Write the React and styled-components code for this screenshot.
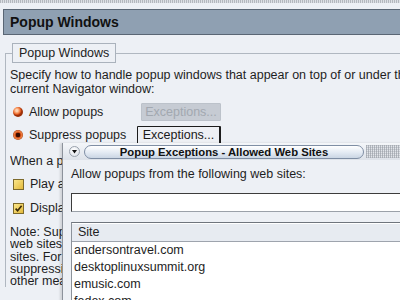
import React from 'react';
import styled, { createGlobalStyle } from 'styled-components';

const GlobalStyle = createGlobalStyle`
  html, body { margin: 0; padding: 0; background: #edf0f5; }
  body { font-family: "Liberation Sans", Arial, sans-serif; }
`;

const Screen = styled.div`
  position: relative;
  width: 400px;
  height: 300px;
  overflow: hidden;
  background: #edf0f5;
  color: #1e1e1e;
  font-size: 12.5px;
`;

const TopStrip = styled.div`
  height: 3px;
  background: repeating-linear-gradient(90deg, #b4b8be 0 1px, #dde0e5 1px 2px);
`;

const Header = styled.div`
  margin: 6px 0 0 3px;
  height: 24px;
  border: 1px solid #5a6674;
  border-right: none;
  background: #8fa0b2;
  padding-left: 6px;
  font-size: 14px;
  font-weight: bold;
  line-height: 24px;
  color: #111;
`;

const Group = styled.fieldset`
  margin: 8px 0 0 5px;
  padding: 5px 0 0 4px;
  border: none;
  border-top: 1px solid #b0b7c0;
  border-left: 1px solid #b0b7c0;
  min-width: 0;
`;

const Legend = styled.legend`
  margin-left: 2px;
  padding: 0 6px;
  height: 20px;
  line-height: 18px;
  border: 1px solid #aab2bc;
  box-sizing: border-box;
  color: #222;
`;

const Para = styled.div`
  line-height: ${p => p.$lh || 14}px;
  margin-top: ${p => p.$mt || 0}px;
  white-space: nowrap;
`;

// the part of the pane that sits under the exceptions window
const Hidden = styled.div`
  width: 52px;
  overflow: hidden;
`;

const OptionGrid = styled.div`
  display: grid;
  grid-template-columns: 127px auto;
  row-gap: 3px;
  margin-top: 6px;
`;

const OptionRow = styled.div`
  display: flex;
  align-items: center;
  height: ${p => p.$h || 20}px;
  padding-left: 3px;
  gap: 6px;
  white-space: nowrap;
`;

const Radio = styled.span`
  width: 10px;
  height: 10px;
  border-radius: 50%;
  flex: none;
  background: ${p => p.$on
    ? 'radial-gradient(circle at 50% 50%, #3a0d00 0 2px, #d24a14 2.6px, #f08a4a 4px, #a83408 5px)'
    : 'radial-gradient(circle at 38% 35%, #ffd2b0 0 1px, #f3864a 3px, #d9531c 4px, #9c3008 5px)'};
`;

const Check = styled.span`
  position: relative;
  width: 9px;
  height: 9px;
  flex: none;
  border: 1px solid #7d6a2c;
  background: linear-gradient(135deg, #fbe78a, #e3b93c);
  svg { position: absolute; left: 0; top: 0; }
`;

const ExcButton = styled.div`
  display: flex;
  align-items: center;
  justify-content: center;
  box-sizing: border-box;
  height: 18px;
  width: ${p => (p.$disabled ? 80 : 84)}px;
  margin-left: ${p => (p.$disabled ? 4 : 0)}px;
  font-size: 12.5px;
  background: ${p => (p.$disabled ? '#c6cbd3' : '#eef0f4')};
  color: ${p => (p.$disabled ? '#a2a8b0' : '#1a1a1a')};
  border: 1px solid ${p => (p.$disabled ? '#bcc2ca' : '#1c1c1c')};
  border-right-width: ${p => (p.$disabled ? 1 : 2)}px;
  border-radius: 1px;
  align-self: center;
`;

const Popup = styled.div`
  position: absolute;
  left: 62px;
  top: 143px;
  right: -20px;
  bottom: -20px;
  background: #edf0f5;
  border-left: 1px solid #8c929b;
  box-shadow: -2px 0 2px rgba(0, 0, 0, 0.12);
`;

const TitleBar = styled.div`
  display: flex;
  align-items: center;
  height: 17px;
  background: linear-gradient(#f4f6f9, #dde2e9);
  padding-left: 6px;
`;

const MenuKnob = styled.span`
  width: 11px;
  height: 11px;
  flex: none;
  border-radius: 50%;
  border: 1px solid #9aa2ad;
  box-sizing: border-box;
  background: radial-gradient(circle at 40% 35%, #ffffff, #d9dee6);
  display: flex;
  align-items: center;
  justify-content: center;
  svg { display: block; }
`;

const TitlePill = styled.div`
  margin-left: 4px;
  width: 280px;
  height: 14px;
  box-sizing: border-box;
  border: 1px solid #7f8ea4;
  border-radius: 7px;
  background: linear-gradient(#ffffff, #e3eaf3 55%, #cbd6e4);
  text-align: center;
  font-size: 11.3px;
  font-weight: bold;
  line-height: 12px;
  color: #111;
  white-space: nowrap;
`;

const TitleDots = styled.div`
  flex: 1;
  height: 13px;
  margin-left: 2px;
  background:
    repeating-linear-gradient(90deg, rgba(140,146,155,0.55) 0 1px, transparent 1px 2px),
    repeating-linear-gradient(0deg, #c8ccd2 0 1px, #e2e5ea 1px 2px);
`;

const PopupBody = styled.div`
  padding: 7px 0 0 8px;
`;

const TextBox = styled.div`
  margin-top: 12px;
  height: 19px;
  box-sizing: border-box;
  background: #fff;
  border: 1px solid #9ba1a9;
  border-top-color: #3c3c3c;
  border-left-color: #3c3c3c;
`;

const SiteTable = styled.div`
  margin-top: 10px;
  border-top: 1px solid #6f757d;
  border-left: 1px solid #8c929a;
  background: #fff;
`;

const SiteHead = styled.div`
  height: 17px;
  line-height: 17px;
  padding-left: 6px;
  background: #e7ebf1;
  border-bottom: 1px solid #9ea4ad;
  border-top: 1px solid #fff;
`;

const SiteRow = styled.div`
  height: 17px;
  line-height: 17px;
  padding-left: 2px;
  white-space: nowrap;
`;

const sites = ['andersontravel.com', 'desktoplinuxsummit.org', 'emusic.com', 'fedex.com', 'google.com'];

const noteLines = [
  'Note: Suppressing all popups may prevent important features of some',
  'web sites from working, such as login windows for banks and shopping',
  'sites. For information on how to allow specific sites to use popups while',
  'suppressing all others, click Help. Some popups may still appear by',
  'other means.',
];

export default function App() {
  return (
    <Screen>
      <GlobalStyle />
      <TopStrip />
      <Header>Popup Windows</Header>
      <Group>
        <Legend>Popup Windows</Legend>
        <Para>Specify how to handle popup windows that appear on top of or under the</Para>
        <Para>current Navigator window:</Para>
        <OptionGrid>
          <OptionRow><Radio />Allow popups</OptionRow>
          <ExcButton $disabled>Exceptions...</ExcButton>
          <OptionRow><Radio $on />Suppress popups</OptionRow>
          <ExcButton>Exceptions...</ExcButton>
        </OptionGrid>
        <Hidden>
          <Para $mt={9}>When a popup window has been suppressed:</Para>
          <div style={{ marginTop: 4 }}>
            <OptionRow $h={24}><Check />Play a sound</OptionRow>
            <OptionRow $h={24}>
              <Check>
                <svg width="9" height="9" viewBox="0 0 9 9">
                  <path d="M1.6 4.6 L3.6 6.8 L7.6 1.8" fill="none" stroke="#3a2a08" strokeWidth="1.6" />
                </svg>
              </Check>
              Display an icon in the status bar
            </OptionRow>
          </div>
          <Para $mt={6} $lh={12.25}>
            {noteLines.map(l => <div key={l}>{l}</div>)}
          </Para>
        </Hidden>
      </Group>

      <Popup>
        <TitleBar>
          <MenuKnob>
            <svg width="5" height="4" viewBox="0 0 5 4"><path d="M0 0 H5 L2.5 3.5 Z" fill="#111" /></svg>
          </MenuKnob>
          <TitlePill>Popup Exceptions - Allowed Web Sites</TitlePill>
          <TitleDots />
        </TitleBar>
        <PopupBody>
          <Para>Allow popups from the following web sites:</Para>
          <TextBox />
          <SiteTable>
            <SiteHead>Site</SiteHead>
            {sites.map(s => <SiteRow key={s}>{s}</SiteRow>)}
          </SiteTable>
        </PopupBody>
      </Popup>
    </Screen>
  );
}
